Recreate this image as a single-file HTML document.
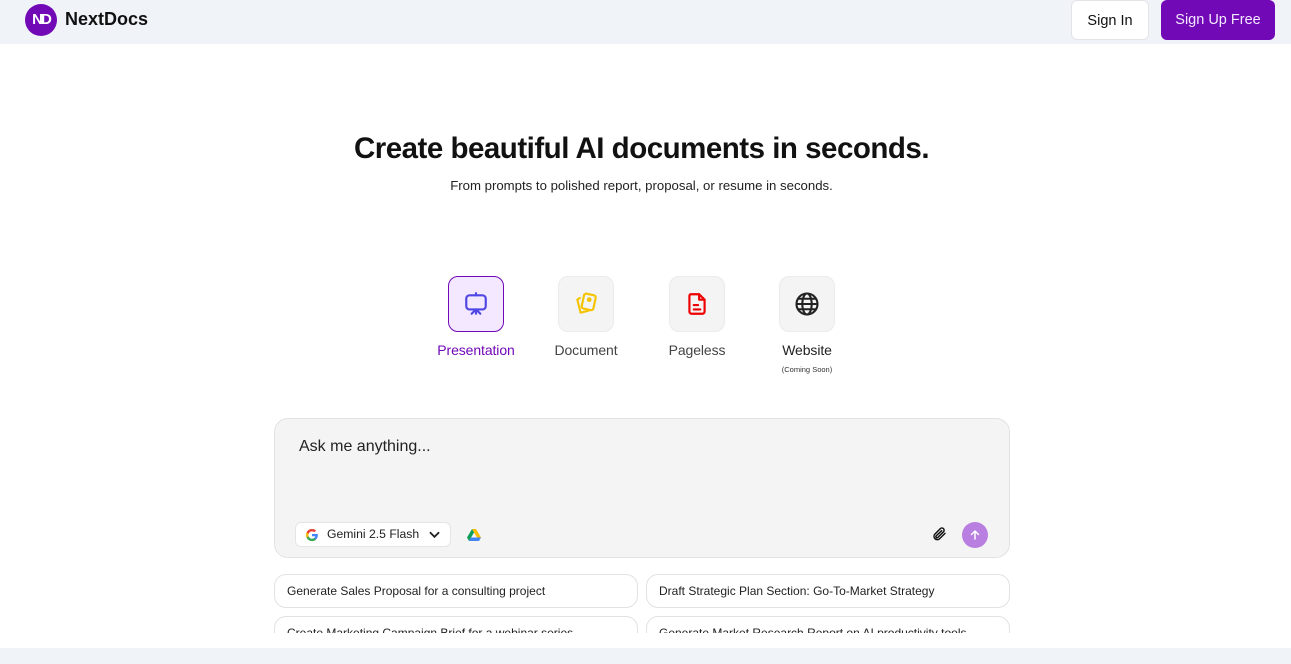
<!DOCTYPE html>
<html><head><meta charset="utf-8"><style>
*{box-sizing:border-box;margin:0;padding:0}
body{width:1291px;height:664px;overflow:hidden;background:#fff;font-family:"Liberation Sans",sans-serif;position:relative}
.hdr{position:absolute;left:0;top:0;width:1291px;height:44px;background:#f0f3f8}
.logo{position:absolute;left:25px;top:4px;width:32px;height:32px;border-radius:50%;background:#7209b7;color:#fff;font-weight:bold;font-size:15px;line-height:32px;text-align:center;letter-spacing:-2px}
.brand{position:absolute;left:65px;top:9px;font-size:18px;font-weight:bold;color:#111}
.btn1{position:absolute;left:1071px;top:0;width:78px;height:40px;border:1px solid #e4e4e7;border-radius:6px;background:#fff;font-size:14.5px;color:#111;text-align:center;line-height:40px}
.btn2{position:absolute;left:1161px;top:0;width:114px;height:40px;border-radius:6px;background:#7209b7;font-size:14.5px;color:#f3e8ff;text-align:center;line-height:41px}
h1{position:absolute;left:0;width:1283px;top:132px;text-align:center;font-size:29.5px;font-weight:bold;color:#111;letter-spacing:-0.5px}
.sub{position:absolute;left:0;width:1283px;top:178px;text-align:center;font-size:13.2px;color:#222}
.tile{position:absolute;top:276px;width:56px;height:56px;border-radius:10px;background:#f4f4f5;border:1px solid #ebebeb;display:flex;align-items:center;justify-content:center}
.lbl{position:absolute;top:342px;font-size:14px;color:#444;text-align:center;width:120px;letter-spacing:-0.1px}
.box{position:absolute;left:274px;top:418px;width:736px;height:140px;border:1px solid #e2e2e2;border-radius:14px;background:#f4f4f5}
.ph{position:absolute;left:24px;top:19px;font-size:16px;color:#222}
.model{position:absolute;left:20px;top:103px;width:156px;height:25px;background:#fff;border:1px solid #e5e5e5;border-radius:6px;font-size:12.2px;color:#222;line-height:23px;padding-left:31px}
.chip{position:absolute;width:364px;height:34px;border:1px solid #e2e2e2;border-radius:12px;background:#fff;font-size:12px;color:#222;line-height:32px;padding-left:12px}
.clip{position:absolute;left:0;top:0;width:1291px;height:633px;overflow:hidden}
.foot{position:absolute;left:0;top:648px;width:1291px;height:16px;background:#f0f3f8}
</style></head><body>
<div class="clip">
<div class="hdr"></div>
<div class="logo">ND</div>
<div class="brand">NextDocs</div>
<div class="btn1">Sign In</div>
<div class="btn2">Sign Up Free</div>
<h1>Create beautiful AI documents in seconds.</h1>
<div class="sub">From prompts to polished report, proposal, or resume in seconds.</div>

<div class="tile" style="left:448px;background:#f3e8ff;border-color:#7209b7">
<svg width="26" height="26" viewBox="0 0 24 24" fill="none" stroke="#4f46e5" stroke-width="2" stroke-linecap="round" stroke-linejoin="round"><rect x="3" y="4" width="18" height="13" rx="3"/><path d="M12 2v2M12 17v4M12 17l-4 4M12 17l4 4"/></svg></div>
<div class="lbl" style="left:416px;color:#7209b7">Presentation</div>

<div class="tile" style="left:558px">
<svg width="26" height="26" viewBox="0 0 24 24" fill="none" stroke="#f5c400" stroke-width="2" stroke-linejoin="round"><rect x="9" y="3" width="11" height="14" rx="2" transform="rotate(12 14 10)"/><path d="M7 6L4 8l3 12 8 -2"/><circle cx="15" cy="8" r="1.2" fill="#f5c400"/></svg></div>
<div class="lbl" style="left:526px">Document</div>

<div class="tile" style="left:669px">
<svg width="26" height="26" viewBox="0 0 24 24" fill="none" stroke="#e00" stroke-width="2" stroke-linejoin="round" stroke-linecap="round"><path d="M6 3h8l5 5v11a2 2 0 0 1-2 2H7a2 2 0 0 1-2-2V5a2 2 0 0 1 1-2z"/><path d="M14 3v5h5M9 13h4M9 17h6"/></svg></div>
<div class="lbl" style="left:637px">Pageless</div>

<div class="tile" style="left:779px">
<svg width="28" height="28" viewBox="0 0 24 24" fill="none" stroke="#222" stroke-width="1.8"><circle cx="12" cy="12" r="9"/><ellipse cx="12" cy="12" rx="4" ry="9"/><path d="M3 12h18M4.5 7.5h15M4.5 16.5h15"/></svg></div>
<div class="lbl" style="left:747px;color:#222">Website</div>
<div style="position:absolute;left:747px;top:365px;width:120px;text-align:center;font-size:7.5px;color:#333">(Coming Soon)</div>

<div class="box">
<div class="ph">Ask me anything...</div>
<div class="model">
<svg style="position:absolute;left:9px;top:5px" width="14" height="14" viewBox="0 0 24 24"><path d="M22 12.2c0-.7-.1-1.4-.2-2H12v3.9h5.6a4.8 4.8 0 0 1-2.1 3.1v2.6h3.4c2-1.8 3.1-4.5 3.1-7.6z" fill="#4285f4"/><path d="M12 22.5c2.8 0 5.2-.9 6.9-2.5l-3.4-2.6c-.9.6-2.1 1-3.5 1-2.7 0-5-1.8-5.8-4.3H2.7v2.7A10.5 10.5 0 0 0 12 22.5z" fill="#34a853"/><path d="M6.2 14.1a6.3 6.3 0 0 1 0-4.1V7.3H2.7a10.5 10.5 0 0 0 0 9.5z" fill="#fbbc05"/><path d="M12 5.7c1.5 0 2.9.5 4 1.6l3-3A10.5 10.5 0 0 0 2.7 7.3l3.5 2.7C7 7.5 9.3 5.7 12 5.7z" fill="#ea4335"/></svg>
Gemini 2.5 Flash
<svg style="position:absolute;left:133px;top:8px" width="11" height="8" viewBox="0 0 12 8" fill="none" stroke="#222" stroke-width="2"><path d="M1 1l5 5 5-5"/></svg></div>
<svg style="position:absolute;left:192px;top:110px" width="14" height="12" viewBox="0 0 14 12"><path d="M5 0h4l5 8.5h-4z" fill="#fbbc04"/><path d="M5 0L0 8.5l2 3.5 5-8.5z" fill="#0f9d58"/><path d="M2 12h10l2-3.5H4z" fill="#4285f4"/></svg>
<svg style="position:absolute;left:656px;top:107px" width="16" height="16" viewBox="0 0 24 24" fill="none" stroke="#111" stroke-width="2.2" stroke-linecap="round"><path d="M21 11l-8.5 8.5a5 5 0 0 1-7-7L14 4a3.3 3.3 0 0 1 4.7 4.7l-8.5 8.5a1.7 1.7 0 0 1-2.4-2.4L16 7"/></svg>
<div style="position:absolute;left:687px;top:103px;width:26px;height:26px;border-radius:50%;background:#b87ee0">
<svg style="position:absolute;left:7px;top:7px" width="12" height="12" viewBox="0 0 12 12" fill="none" stroke="#fff" stroke-width="1.5" stroke-linecap="round"><path d="M6 10V2M2.5 5.5L6 2l3.5 3.5"/></svg></div>
</div>

<div class="chip" style="left:274px;top:574px">Generate Sales Proposal for a consulting project</div>
<div class="chip" style="left:646px;top:574px">Draft Strategic Plan Section: Go-To-Market Strategy</div>
<div class="chip" style="left:274px;top:616px">Create Marketing Campaign Brief for a webinar series</div>
<div class="chip" style="left:646px;top:616px">Generate Market Research Report on AI productivity tools</div>
</div>
<div class="foot"></div>
</body></html>
